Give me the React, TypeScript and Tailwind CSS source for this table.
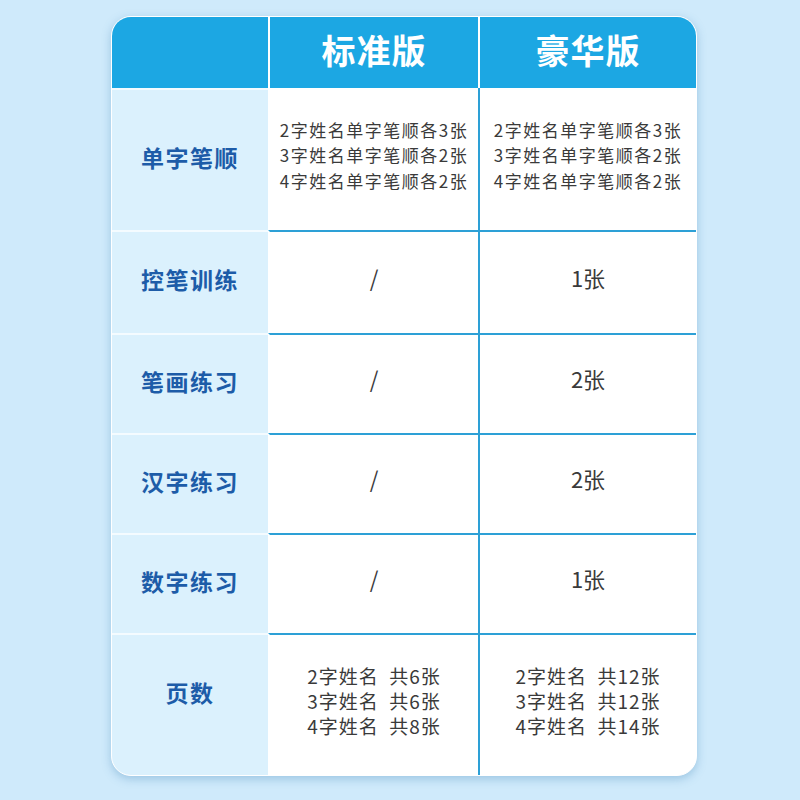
import React from 'react';

type Row = {
  label: string;
  std: string[];
  pro: string[];
  h: string;
  kind: 'list' | 'single' | 'pages';
};

const rows: Row[] = [
  {
    label: '单字笔顺',
    std: ['2字姓名单字笔顺各3张', '3字姓名单字笔顺各2张', '4字姓名单字笔顺各2张'],
    pro: ['2字姓名单字笔顺各3张', '3字姓名单字笔顺各2张', '4字姓名单字笔顺各2张'],
    h: 'h-[142px]',
    kind: 'list',
  },
  { label: '控笔训练', std: ['/'], pro: ['1张'], h: 'h-[103px]', kind: 'single' },
  { label: '笔画练习', std: ['/'], pro: ['2张'], h: 'h-[100px]', kind: 'single' },
  { label: '汉字练习', std: ['/'], pro: ['2张'], h: 'h-[100px]', kind: 'single' },
  { label: '数字练习', std: ['/'], pro: ['1张'], h: 'h-[100px]', kind: 'single' },
  {
    label: '页数',
    std: ['2字姓名\u2002共6张', '3字姓名\u2002共6张', '4字姓名\u2002共8张'],
    pro: ['2字姓名\u2002共12张', '3字姓名\u2002共12张', '4字姓名\u2002共14张'],
    h: 'h-[142px]',
    kind: 'pages',
  },
];

function Cell({ lines, kind }: { lines: string[]; kind: Row['kind'] }) {
  if (kind === 'single') {
    return <span className="text-[22px] leading-none pb-[12px] text-[#3a3a3a]">{lines[0]}</span>;
  }
  const cls =
    kind === 'list'
      ? 'text-[17px] leading-[25.5px] tracking-[1.5px] pb-[8px]'
      : 'text-[19px] leading-[25px] tracking-[1px] pb-[10px]';
  return (
    <div className={`flex flex-col items-center text-[#3a3a3a] ${cls}`}>
      {lines.map((l, i) => (
        <span key={i} className="whitespace-pre">
          {l}
        </span>
      ))}
    </div>
  );
}

export default function App() {
  return (
    <div
      className="w-[800px] h-[800px] bg-[#cfeafb] pt-[16px] pl-[111px]"
      style={{ fontFamily: '"Noto Sans CJK SC", "Noto Sans", sans-serif' }}
    >
      <div className="w-[586px] rounded-[20px] border border-white overflow-hidden bg-white shadow-[0_3px_10px_rgba(60,130,180,0.35)]">
        {/* header */}
        <div className="grid grid-cols-[156px_210px_218px] h-[71px] bg-[#1ca7e3] text-white font-bold text-[34px] tracking-[1px]">
          <div />
          <div className="flex items-center justify-center border-l-2 border-white pb-[6px]">标准版</div>
          <div className="flex items-center justify-center border-l-2 border-white pb-[6px]">豪华版</div>
        </div>

        {rows.map((r, i) => (
          <div key={r.label} className={`grid grid-cols-[156px_210px_218px] ${r.h}`}>
            <div
              className={`flex items-center justify-center bg-[#dbf1fd] text-[#1d5ca8] font-bold text-[23px] tracking-[1.5px] border-t-2 border-[#f4fbff] ${
                i === 0 ? 'border-t-0' : ''
              } ${r.kind === 'pages' ? 'pb-[26px]' : 'pb-[6px]'}`}
            >
              {r.label}
            </div>
            <div
              className={`flex items-center justify-center border-l-2 border-white ${
                i === 0 ? '' : 'border-t-2 border-t-[#2da0d6]'
              }`}
            >
              <Cell lines={r.std} kind={r.kind} />
            </div>
            <div
              className={`flex items-center justify-center border-l-2 border-l-[#2da0d6] ${
                i === 0 ? '' : 'border-t-2 border-t-[#2da0d6]'
              }`}
            >
              <Cell lines={r.pro} kind={r.kind} />
            </div>
          </div>
        ))}
      </div>
    </div>
  );
}
